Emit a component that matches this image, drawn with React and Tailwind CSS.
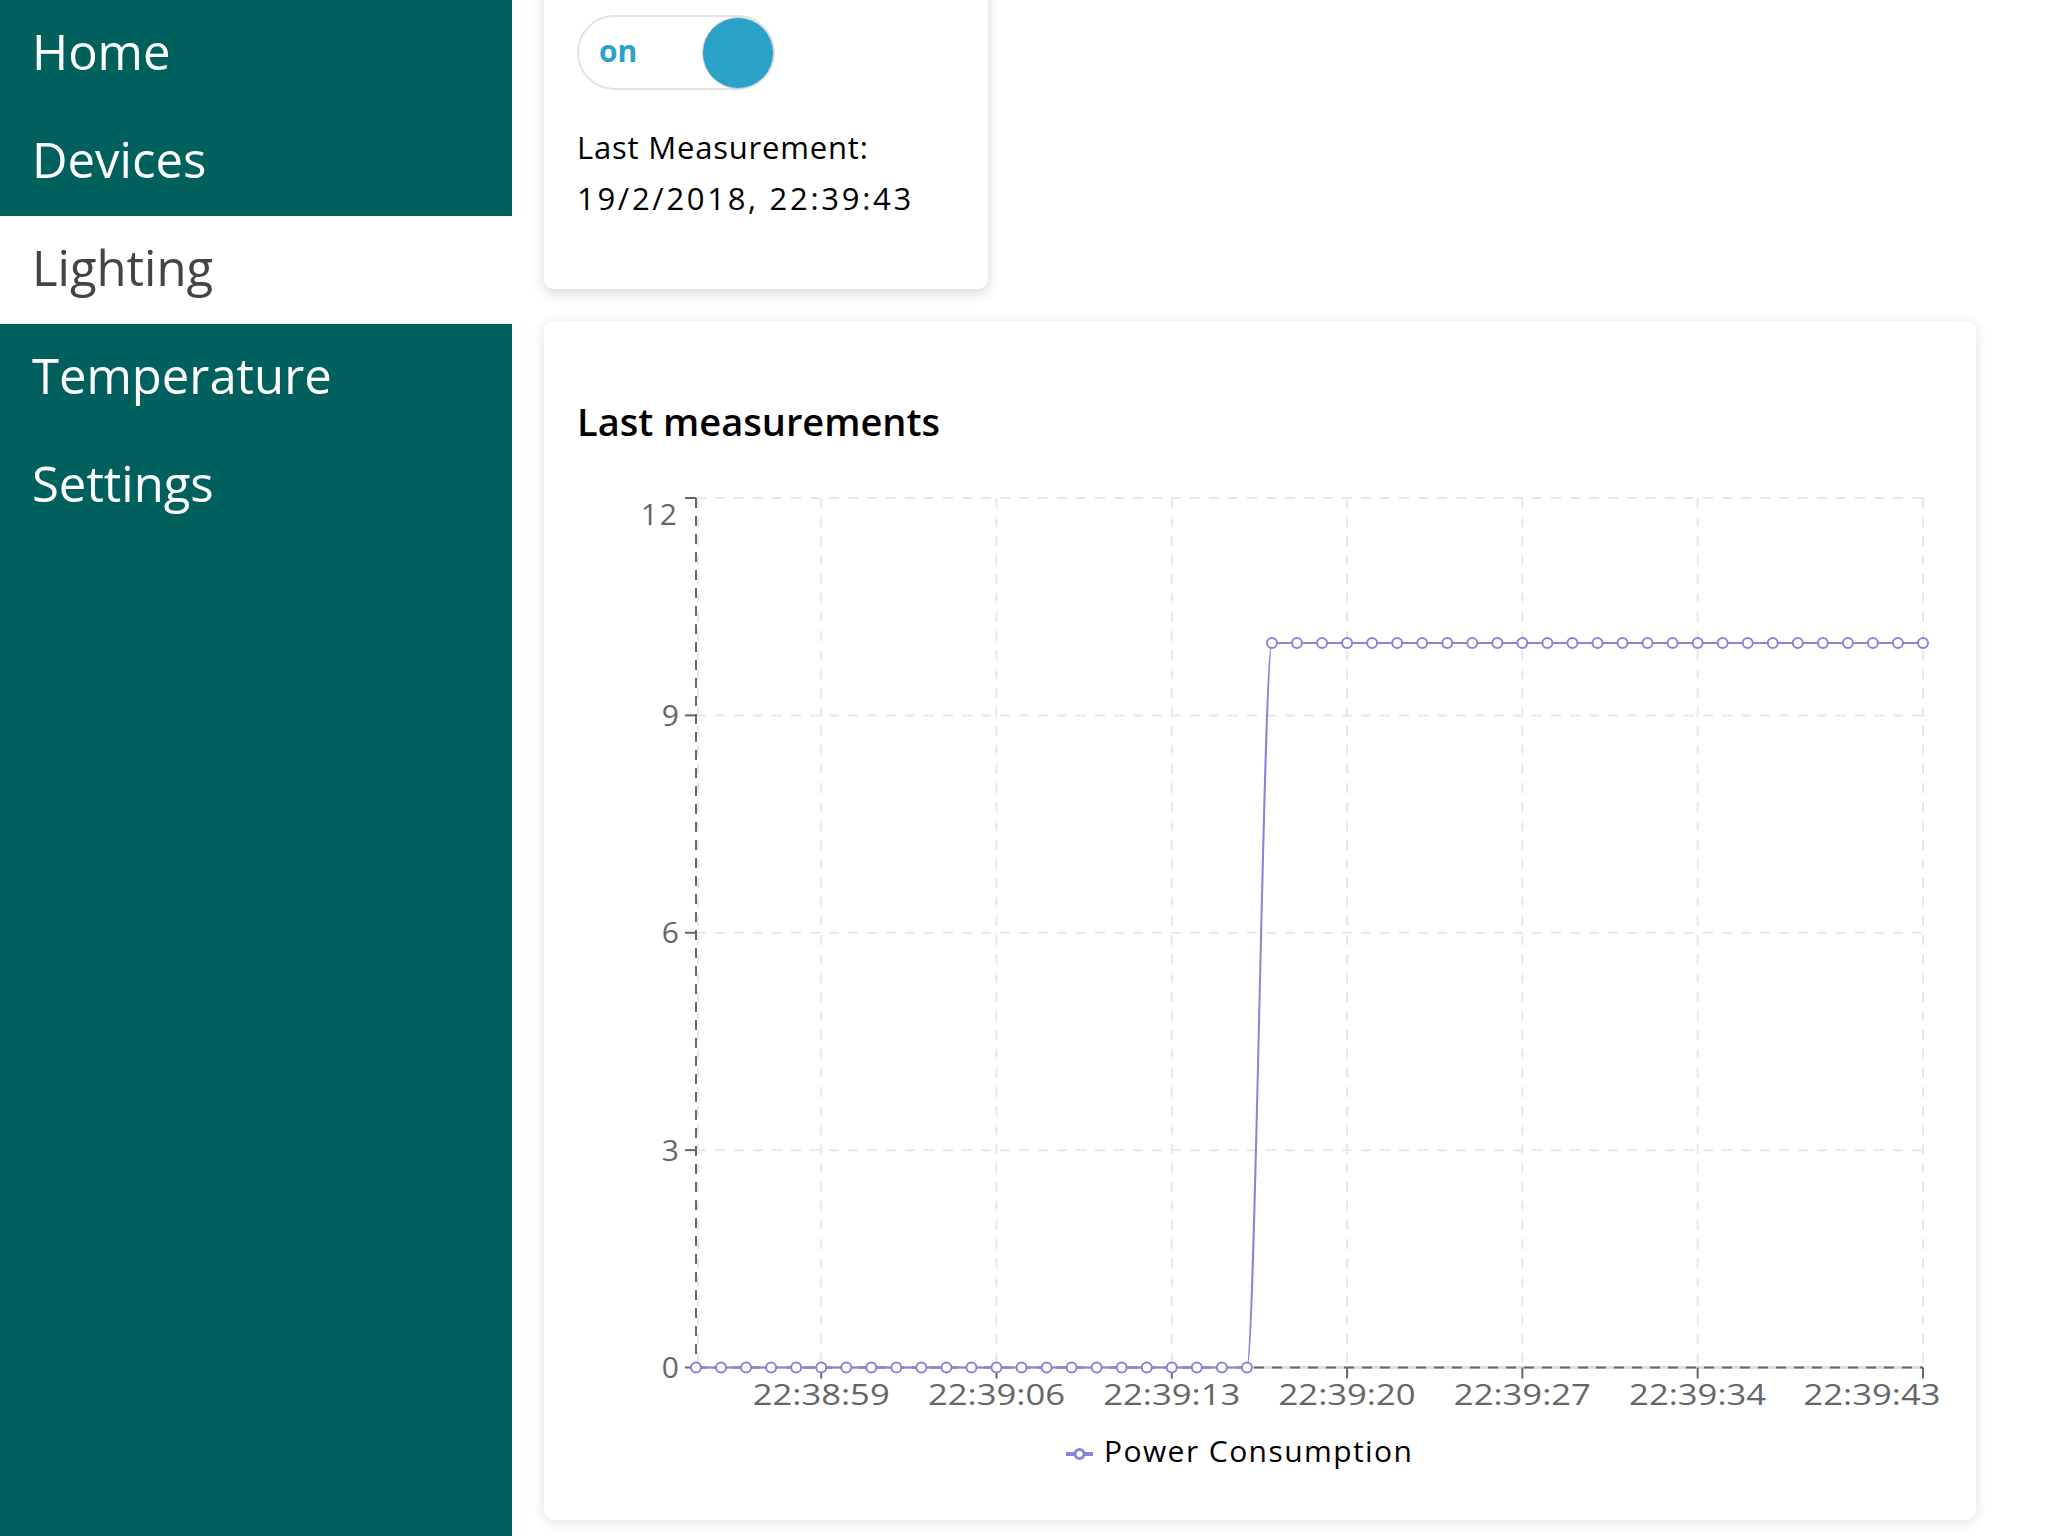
import React from "react";

const STEP = 1227 / 49;
const X0 = 696;
const Y0 = 1367.5;
const PX_PER_UNIT = 869.5 / 12;
const yOf = (v) => Y0 - v * PX_PER_UNIT;
const HIGH = yOf(10);

const points = Array.from({ length: 50 }, (_, i) => ({
  x: X0 + i * STEP,
  y: i < 23 ? Y0 : HIGH,
}));

const xTicks = [
  { k: 5, label: "22:38:59" },
  { k: 12, label: "22:39:06" },
  { k: 19, label: "22:39:13" },
  { k: 26, label: "22:39:20" },
  { k: 33, label: "22:39:27" },
  { k: 40, label: "22:39:34" },
  { k: 49, label: "22:39:43", cx: 1872 },
];

const yTicks = [0, 3, 6, 9, 12];

function Chart() {
  const xa = points[22].x;
  const xb = points[23].x;
  const dx = xb - xa;
  const d = `M${X0},${Y0} H${xa} C${xa + dx / 3},${Y0} ${xb - dx / 3},${HIGH} ${xb},${HIGH} H${points[49].x}`;
  const xEnd = X0 + 49 * STEP;
  return (
    <svg
      width="1432"
      height="1080"
      viewBox="544 440 1432 1080"
      className="block"
    >
      {/* grid */}
      <g stroke="#e8e8e8" strokeWidth="2" strokeDasharray="10 9" fill="none">
        {[3, 6, 9, 12].map((v) => (
          <line key={v} x1={X0} x2={xEnd} y1={yOf(v)} y2={yOf(v)} />
        ))}
        {xTicks.map((t) => (
          <line
            key={t.k}
            x1={X0 + t.k * STEP}
            x2={X0 + t.k * STEP}
            y1={yOf(12)}
            y2={Y0}
          />
        ))}
        <line x1={X0 + 2} x2={X0 + 2} y1={yOf(12)} y2={Y0} />
      </g>
      {/* x axis */}
      <line x1={X0} x2={xEnd} y1={Y0} y2={Y0} stroke="#dedede" strokeWidth="3" />
      <line
        x1={X0}
        x2={xEnd}
        y1={Y0}
        y2={Y0}
        stroke="#666"
        strokeWidth="2"
        strokeDasharray="10 8"
      />
      {xTicks.map((t) => (
        <line
          key={t.k}
          x1={X0 + t.k * STEP}
          x2={X0 + t.k * STEP}
          y1={Y0}
          y2={Y0 + 11}
          stroke="#666"
          strokeWidth="2"
        />
      ))}
      {/* y axis */}
      <line
        x1={X0}
        x2={X0}
        y1={yOf(12)}
        y2={Y0}
        stroke="#666"
        strokeWidth="2"
        strokeDasharray="10 8"
      />
      {yTicks.map((v) => (
        <line
          key={v}
          x1={X0 - 11}
          x2={X0}
          y1={yOf(v)}
          y2={yOf(v)}
          stroke="#666"
          strokeWidth="2"
        />
      ))}
      {/* labels */}
      <g fill="#666" fontSize="30">
        {yTicks.map((v) => (
          <text
            key={v}
            x={679}
            y={v === 12 ? 525 : yOf(v) + 10.7}
            textAnchor="end"
            letterSpacing={v === 12 ? "2" : "0"}
          >
            {v}
          </text>
        ))}
        {xTicks.map((t) => (
          <text
            key={t.k}
            x={t.cx ?? X0 + t.k * STEP}
            y={1405}
            textAnchor="middle"
            textLength="137"
            lengthAdjust="spacingAndGlyphs"
          >
            {t.label}
          </text>
        ))}
      </g>
      {/* data */}
      <path d={d} fill="none" stroke="#8884d8" strokeWidth="2" />
      {points.map((p, i) => (
        <circle
          key={i}
          cx={p.x}
          cy={p.y}
          r="5"
          fill="#fff"
          stroke="#8884d8"
          strokeWidth="2"
        />
      ))}
      {/* legend */}
      <line x1="1066" x2="1093" y1="1454" y2="1454" stroke="#8884d8" strokeWidth="4" />
      <circle cx="1079.5" cy="1454" r="4.5" fill="#fff" stroke="#8884d8" strokeWidth="3" />
      <text
        x="1104"
        y="1462"
        fontSize="30"
        fill="#000"
        textLength="308"
        lengthAdjust="spacing"
      >
        Power Consumption
      </text>
    </svg>
  );
}

const navItems = ["Home", "Devices", "Lighting", "Temperature", "Settings"];

export default function App() {
  return (
    <div className="flex min-h-[1536px] w-full bg-white font-['Open_Sans',sans-serif] overflow-hidden">
      <nav className="w-[512px] shrink-0 bg-[#00605e] min-h-[1536px]">
        {navItems.map((item) => (
          <div
            key={item}
            className={
              item === "Lighting"
                ? "h-[108px] flex items-center pl-[32px] pb-[4px] text-[49px] text-[#444444] bg-white"
                : "h-[108px] flex items-center pl-[32px] pb-[4px] text-[49px] text-white"
            }
          >
            {item}
          </div>
        ))}
      </nav>
      <main className="flex flex-col gap-[32px] pl-[32px] mt-[-18px]">
        <div className="w-[444px] bg-white rounded-[10px] shadow-[0_4px_14px_rgba(0,0,0,0.16)] pt-[33px] pl-[33px] pb-[65px]">
          <div className="relative w-[198px] h-[75px] rounded-full border-2 border-[#e3e3e3] bg-white flex items-center">
            <span className="pl-[20px] pb-[4px] text-[30px] font-bold text-[#2aa2ca] leading-none">
              on
            </span>
            <div className="absolute top-0 right-[-1px] w-[72px] h-[72px] rounded-full bg-[#2aa2ca] border border-[#d6d6d6]" />
          </div>
          <div className="mt-[32px] text-[31px] leading-[51px] text-black">
            <div className="tracking-[0.8px]">Last Measurement:</div>
            <div className="tracking-[2.7px]">19/2/2018, 22:39:43</div>
          </div>
        </div>
        <div className="w-[1432px] bg-white rounded-[10px] shadow-[0_2px_12px_rgba(0,0,0,0.13)] flex flex-col pt-[81px]">
          <div className="pl-[33px] text-[38px] leading-[38px] font-semibold text-black">
            Last measurements
          </div>
          <Chart />
        </div>
      </main>
    </div>
  );
}
